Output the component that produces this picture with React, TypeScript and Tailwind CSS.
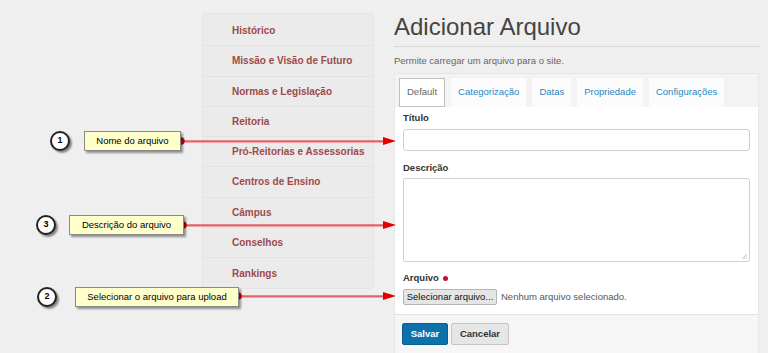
import React from "react";

const sidebarItems = [
  "Histórico",
  "Missão e Visão de Futuro",
  "Normas e Legislação",
  "Reitoria",
  "Pró-Reitorias e Assessorias",
  "Centros de Ensino",
  "Câmpus",
  "Conselhos",
  "Rankings",
];

const tabs = ["Categorização", "Datas", "Propriedade", "Configurações"];

function Circle({ n, x, y }: { n: string; x: number; y: number }) {
  return (
    <div
      className="absolute w-[20px] h-[20px] rounded-full bg-white border-2 border-[#222] flex items-center justify-center text-[9px] font-bold text-black shadow-[2px_2px_2px_rgba(0,0,0,0.45)]"
      style={{ left: x - 10, top: y - 10 }}
    >
      {n}
    </div>
  );
}

function Note({ text, x, y, w }: { text: string; x: number; y: number; w: number }) {
  return (
    <div
      className="absolute h-[20px] bg-[#ffffcc] border border-[#8a8a8a] flex items-center justify-center text-[9.5px] text-black shadow-[2px_2px_2px_rgba(0,0,0,0.4)]"
      style={{ left: x, top: y, width: w }}
    >
      {text}
    </div>
  );
}

function Arrow({ x1, y }: { x1: number; y: number }) {
  return (
    <g>
      <line x1={x1} y1={y + 1} x2={384} y2={y + 1} stroke="#f2a5a5" strokeWidth={2} />
      <line x1={x1} y1={y} x2={384} y2={y} stroke="#d42020" strokeWidth={1} />
      <polygon points={`383,${y - 4} 396,${y} 383,${y + 4}`} fill="#e00000" />
      <circle cx={x1} cy={y} r={3.5} fill="#e00000" stroke="#a00000" strokeWidth={0.5} />
    </g>
  );
}

export default function App() {
  return (
    <div
      className="relative w-[768px] h-[353px] overflow-hidden bg-[#efefef] flex"
      style={{ fontFamily: '"Liberation Sans", Arial, sans-serif' }}
    >
      {/* Sidebar */}
      <div className="ml-[202px] mt-[13px] w-[172px] self-start bg-[#ebebeb] border border-[#e4e4e4] rounded-[3px] pt-[2px]">
        {sidebarItems.map((item, i) => (
          <div
            key={item}
            className={`h-[30.25px] flex items-center pl-[29px] text-[10px] font-bold text-[#9e4a4a] ${
              i < sidebarItems.length - 1 ? "border-b border-[#e2e2e2]" : ""
            }`}
          >
            {item}
          </div>
        ))}
      </div>

      {/* Main content */}
      <div className="ml-[20px] w-[366px] flex flex-col">
        <div className="pt-[12px] pb-[5px] border-b border-[#d9d9d9]">
          <h1 className="text-[24px] leading-[29px] text-[#444]">Adicionar Arquivo</h1>
        </div>
        <p className="mt-[7px] text-[9.5px] leading-[14px] text-[#666]">
          Permite carregar um arquivo para o site.
        </p>

        <div className="mt-[5px] w-[365px] border border-[#e6e6e6] bg-[#f3f3f3] flex flex-col">
          {/* Tabs */}
          <div className="pt-[4px] px-[4px] flex gap-[6px]">
            <div className="h-[29px] px-[7px] flex items-center bg-white border border-[#bfbfbf] text-[9.5px] text-[#666]">
              Default
            </div>
            {tabs.map((t) => (
              <div
                key={t}
                className="h-[29px] px-[7px] flex items-center bg-[#fcfcfc] text-[9.5px] text-[#1f87c4]"
              >
                {t}
              </div>
            ))}
          </div>

          {/* Body */}
          <div className="bg-white px-[8px] pt-[4px] pb-[9px] flex flex-col">
            <label className="h-[14px] leading-[14px] text-[9.5px] font-bold text-[#333]">Título</label>
            <div className="mt-[4px] h-[22px] border border-[#d0d0d0] rounded-[3px] bg-white" />
            <label className="mt-[10px] h-[14px] leading-[14px] text-[9.5px] font-bold text-[#333]">
              Descrição
            </label>
            <div className="mt-[3px] h-[84px] border border-[#d0d0d0] rounded-[3px] bg-white relative">
              <svg className="absolute right-[2px] bottom-[2px]" width="6" height="6" viewBox="0 0 6 6">
                <line x1="1" y1="6" x2="6" y2="1" stroke="#aaa" strokeWidth="0.8" />
                <line x1="3.5" y1="6" x2="6" y2="3.5" stroke="#aaa" strokeWidth="0.8" />
              </svg>
            </div>
            <label className="mt-[9px] h-[14px] leading-[14px] text-[9.5px] font-bold text-[#333] flex items-center gap-[4px]">
              Arquivo
              <span className="w-[5px] h-[5px] rounded-full bg-[#c8102e] inline-block" />
            </label>
            <div className="mt-[4px] flex items-center gap-[4px]">
              <div className="h-[16px] w-[94px] flex items-center justify-center bg-[#e5e5e5] border border-[#b5b5b5] rounded-[2px] text-[9.5px] text-[#111]">
                Selecionar arquivo...
              </div>
              <span className="text-[9.5px] text-[#555]">Nenhum arquivo selecionado.</span>
            </div>
          </div>

          {/* Footer */}
          <div className="border-t border-[#e0e0e0] bg-[#f6f6f6] px-[7px] pt-[8px] pb-[12px] flex gap-[3px]">
            <div className="h-[22px] w-[46px] flex items-center justify-center bg-[#0d72a9] border border-[#0a5f8e] rounded-[2px] text-[9.5px] font-bold text-white">
              Salvar
            </div>
            <div className="h-[22px] w-[58px] flex items-center justify-center bg-[#e6e6e6] border border-[#c4c4c4] rounded-[2px] text-[9.5px] font-bold text-[#333]">
              Cancelar
            </div>
          </div>
        </div>
      </div>

      {/* Annotation overlay */}
      <svg className="absolute left-0 top-0 pointer-events-none" width="768" height="353">
        <Arrow x1={181} y={141} />
        <Arrow x1={183} y={225} />
        <Arrow x1={238} y={296} />
      </svg>
      <Note text="Nome do arquivo" x={84} y={131} w={97} />
      <Note text="Descrição do arquivo" x={69} y={215} w={115} />
      <Note text="Selecionar o arquivo para upload" x={75} y={287} w={164} />
      <Circle n="1" x={60} y={141} />
      <Circle n="3" x={46} y={225} />
      <Circle n="2" x={47} y={297} />
    </div>
  );
}
